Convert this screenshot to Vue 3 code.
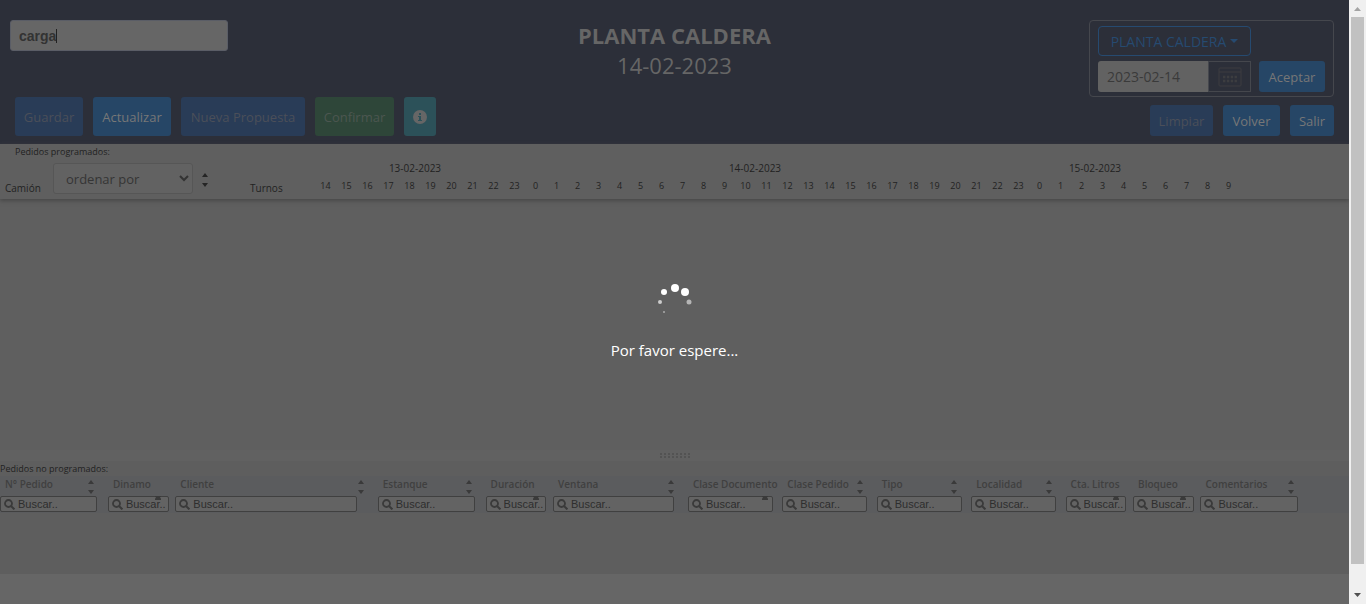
<script setup>
import { ref } from 'vue'

const search = ref('carga')
const date = ref('2023-02-14')
const days = ['13-02-2023', '14-02-2023', '15-02-2023']
const hours = Array.from({ length: 44 }, (_, i) => (i + 14) % 24)
const columns = [
  { label: 'N° Pedido', width: 8 },
  { label: 'Dinamo', width: 5, narrow: true },
  { label: 'Cliente', width: 15 },
  { label: 'Estanque', width: 8 },
  { label: 'Duración', width: 5, narrow: true },
  { label: 'Ventana', width: 10 },
  { label: 'Clase Documento', width: 7, narrow: true },
  { label: 'Clase Pedido', width: 7 },
  { label: 'Tipo', width: 7 },
  { label: 'Localidad', width: 7 },
  { label: 'Cta. Litros', width: 5, narrow: true },
  { label: 'Bloqueo', width: 5, narrow: true },
  { label: 'Comentarios', width: 8 }
]
</script>

<template>
  <div class="window">
    <main class="page">
      <header class="top">
        <div class="left">
          <div class="searchbox">
            <input v-model="search" class="search" type="text" aria-label="Buscar pedido" />
            <span class="caret"></span>
          </div>
          <div class="actions">
            <button class="btn off guardar" disabled>Guardar</button>
            <button class="btn actualizar">Actualizar</button>
            <button class="btn off nueva" disabled>Nueva Propuesta</button>
            <button class="btn green" disabled>Confirmar</button>
            <button class="btn info" aria-label="Información">
              <svg width="14" height="14" viewBox="0 0 14 14">
                <circle cx="7" cy="7" r="7" fill="#666" />
                <path d="M6 3h2v2H6zM5 6h3v4h1v1H5v-1h1V7H5z" fill="#2c5159" />
              </svg>
            </button>
          </div>
        </div>
        <div class="title">
          <h1>PLANTA CALDERA</h1>
          <p>14-02-2023</p>
        </div>
        <div class="right">
          <form class="plant" @submit.prevent>
            <button type="button" class="drop">
              PLANTA CALDERA
              <svg width="8" height="4" viewBox="0 0 8 4"><path d="M0 0h8L4 4z" fill="#264a70" /></svg>
            </button>
            <div class="daterow">
              <div class="dategroup">
                <input v-model="date" class="date" type="text" aria-label="Fecha" />
                <button type="button" class="cal" aria-label="Calendario">
                  <svg width="24" height="20" viewBox="0 0 24 20" fill="none" stroke="#3c3d40">
                    <rect x="1" y="1" width="22" height="18" rx="1" />
                    <path d="M1 5h22" />
                    <path d="M5 10h14M5 14h14" stroke-width="2.4" stroke-dasharray="2.4 1.45" />
                  </svg>
                </button>
              </div>
              <button class="btn accept">Aceptar</button>
            </div>
          </form>
          <div class="nav">
            <button class="btn off limpiar" disabled>Limpiar</button>
            <button class="btn volver">Volver</button>
            <button class="btn salir">Salir</button>
          </div>
        </div>
      </header>

      <section class="schedule">
        <div class="caption">Pedidos programados:</div>
        <div class="truck">
          <label for="orden">Camión</label>
          <div class="selectwrap">
            <select id="orden"><option>ordenar por</option></select>
            <svg width="10" height="7" viewBox="0 0 10 7"><path d="M1 1l4 4 4-4" fill="none" stroke="#333" stroke-width="2" /></svg>
          </div>
          <svg class="sorter" width="6" height="14" viewBox="0 0 6 14"><path d="M0 4l3-4 3 4zM0 10h6l-3 4z" fill="#252525" /></svg>
        </div>
        <div class="timeline">
          <div class="days"><span v-for="d in days" :key="d">{{ d }}</span></div>
          <div class="hourline">
            <span class="turnos">Turnos</span>
            <div class="hours"><span v-for="(h, i) in hours" :key="i">{{ h }}</span></div>
          </div>
        </div>
      </section>

      <section class="board"></section>

      <div class="splitter">
        <svg width="30" height="5" viewBox="0 0 30 5"><path d="M0 1h30M0 4h30" stroke="#535353" stroke-width="2" stroke-dasharray="2 2" /></svg>
      </div>

      <section class="pending">
        <table>
          <caption>Pedidos no programados:</caption>
          <colgroup>
            <col v-for="c in columns" :key="c.label" :style="{ width: c.width + '%' }" />
            <col />
          </colgroup>
          <thead>
            <tr>
              <th v-for="c in columns" :key="c.label" scope="col">
                <div class="name">
                  <span>{{ c.label }}</span>
                  <svg v-if="!c.narrow" class="arrows" width="8" height="14" viewBox="0 0 8 14"><path d="M1 4l3-4 3 4zM1 10h6l-3 4z" fill="#3a3a3a" /></svg>
                </div>
                <div class="field">
                  <svg width="11" height="11" viewBox="0 0 11 11" fill="none" stroke="#3a3a3a"><circle cx="4.5" cy="4.5" r="3.5" stroke-width="1.8" /><path d="M7 7l3.4 3.4" stroke-width="2" /></svg>
                  <input type="text" placeholder="Buscar.." :aria-label="'Buscar ' + c.label" />
                </div>
                <svg v-if="c.narrow" class="tucked" width="8" height="4" viewBox="0 0 8 4"><path d="M1 0h6v1H6l1 2v1H1V3l1-2H1z" fill="#3a3a3a" /></svg>
              </th>
              <td></td>
            </tr>
          </thead>
        </table>
      </section>

      <div class="loader" role="status">
        <svg width="36" height="36" viewBox="0 0 36 36" fill="#fff">
          <circle cx="18" cy="6" r="4" />
          <circle cx="28" cy="10" r="4" />
          <circle cx="7" cy="10" r="3" />
          <circle cx="3" cy="20" r="2" fill="#ccc" />
          <circle cx="32" cy="20" r="2.5" fill="#b5b5b5" />
          <circle cx="7" cy="30" r="1" fill="#aaa" />
        </svg>
        <p>Por favor espere...</p>
      </div>
    </main>

    <div class="scrollbar">
      <svg width="17" height="17" viewBox="0 0 17 17"><path d="M5 11h7L8.5 7z" fill="#a3a3a3" /></svg>
      <div class="track"><div class="thumb"></div></div>
      <svg width="17" height="17" viewBox="0 0 17 17"><path d="M5 6h7l-3.5 4z" fill="#505050" /></svg>
    </div>
  </div>
</template>

<style>
body { background: #666; }
</style>

<style scoped>
* { box-sizing: border-box; }
.window { display: flex; min-height: 100vh; font-family: "Open Sans", "Noto Sans", sans-serif; color: #222; }
.page { position: relative; flex: 1; min-width: 0; display: flex; flex-direction: column; overflow: hidden; background: #666; }
button, input, select { font: inherit; margin: 0; outline: none; }
h1, p { margin: 0; }

.top { display: grid; grid-template-columns: 1fr auto 1fr; background: #2c2f39; padding: 20px 15px 8px; color: #666; }
.left { display: flex; flex-direction: column; justify-content: space-between; align-items: flex-start; }
.searchbox { position: relative; margin-left: -5px; }
.search { display: block; width: 218px; height: 31px; padding: 0 8px; border: 1px solid #5a5d66; border-radius: 3px; background: #666; color: #333; font: bold 14px "Liberation Sans", sans-serif; }
.caret { position: absolute; left: 46px; top: 9px; width: 1px; height: 14px; background: #222; }
.actions { display: flex; gap: 10px; }
.btn { height: 31px; padding: 0; border: 0; border-radius: 3px; background: #264666; color: #777; font-size: 13px; white-space: nowrap; }
.actions .btn { height: 39px; }
.btn.off { background: #293c57; color: #4b4f59; }
.btn.green { width: 79px; background: #2e4639; color: #4c5650; }
.btn.info { width: 32px; background: #2c5159; display: grid; place-items: center; }
.guardar { width: 68px; }
.actualizar { width: 78px; }
.nueva { width: 124px; }
.title { text-align: center; line-height: 30px; font-size: 22px; }
.title h1 { font-size: 22px; font-weight: 700; line-height: 30px; }
.right { display: flex; flex-direction: column; align-items: flex-end; gap: 8px; }
.plant { border: 1px solid #45474d; border-radius: 4px; padding: 5px 8px 4px; }
.drop { display: flex; align-items: center; justify-content: center; gap: 4px; width: 153px; height: 30px; padding: 0; border: 1px solid #264a70; border-radius: 4px; background: none; color: #264a70; font-size: 14px; white-space: nowrap; }
.daterow { display: flex; gap: 8px; margin-top: 5px; }
.dategroup { display: flex; width: 153px; }
.date { width: 110px; height: 31px; padding: 0 9px; border: 0; border-radius: 3px 0 0 3px; background: #626262; color: #3a3a3a; font-size: 14px; }
.cal { flex: 1; display: grid; place-items: center; padding: 0; border: 1px solid #45474d; background: none; }
.accept { width: 66px; }
.nav { display: flex; gap: 10px; }
.limpiar { width: 63px; }
.volver { width: 57px; }
.salir { width: 44px; }

.schedule { display: grid; grid-template-columns: 245px 1fr; grid-template-rows: 16px 39px; background: #5f5f5f; font-size: 10px; box-shadow: 0 2px 4px #484848; z-index: 1; }
.caption { grid-column: 1 / 3; padding-left: 15px; line-height: 16px; font-size: 9px; }
.truck { display: flex; padding-left: 5px; }
.truck label { width: 48px; padding-top: 21px; line-height: 14px; }
.selectwrap { display: grid; width: 140px; height: 31px; margin-top: 3px; align-items: center; }
.selectwrap select { grid-area: 1 / 1; appearance: none; width: 100%; height: 100%; padding: 0 12px; border: 1px solid #565656; border-radius: 3px; background: #626262; color: #353535; font-size: 13px; }
.selectwrap svg { grid-area: 1 / 1; justify-self: end; margin-right: 4px; pointer-events: none; }
.sorter { margin: 13px 0 0 9px; }
.timeline { display: flex; flex-direction: column; max-width: 1020px; }
.days { display: grid; grid-template-columns: repeat(3, 1fr); text-align: center; line-height: 16px; }
.hourline { display: flex; margin-top: 2px; }
.turnos { width: 70px; padding: 3px 0 0 5px; line-height: 14px; }
.hours { flex: 1; max-width: 924px; display: grid; grid-template-columns: repeat(44, 1fr); text-align: center; line-height: 16px; font-size: 9px; }

.board { flex: 1; background: #5f5f5f; }
.splitter { height: 11px; display: grid; place-items: center; background: #616161; }
.pending { background: #5e5e5e; height: 113px; margin-bottom: 30px; }
table { width: 100%; table-layout: fixed; border-collapse: collapse; }
caption { text-align: left; line-height: 15px; font-size: 9px; }
thead { background: #5b5c5e; }
th { position: relative; height: 37px; padding: 0; vertical-align: top; text-align: left; font-weight: 600; font-size: 10px; color: #404040; }
.name { display: flex; justify-content: space-between; height: 20px; padding: 0 13px 0 5px; line-height: 16px; white-space: nowrap; }
.arrows { flex: none; margin-top: 4px; }
.field { display: flex; align-items: center; gap: 3px; width: 90%; height: 16px; padding-left: 3px; border: 1px solid #404040; border-radius: 2px; background: #636363; }
.field svg { flex: none; }
.field input { flex: 1; min-width: 0; width: 100%; height: 14px; padding: 0; border: 0; background: none; font: 11px "Liberation Sans", sans-serif; }
.field input::placeholder { color: #2e2e2e; opacity: 1; }
.tucked { position: absolute; right: 13px; top: 20px; }

.loader { position: absolute; z-index: 2; top: 282px; left: 0; right: 0; display: flex; flex-direction: column; align-items: center; gap: 22px; color: #fff; font-size: 15px; line-height: 20px; }

.scrollbar { width: 17px; height: 100vh; display: flex; flex-direction: column; background: #f0f0f0; }
.scrollbar svg { flex: none; }
.track { flex: 1; padding: 0 2px; }
.thumb { height: 96%; background: #c1c1c1; }
</style>
